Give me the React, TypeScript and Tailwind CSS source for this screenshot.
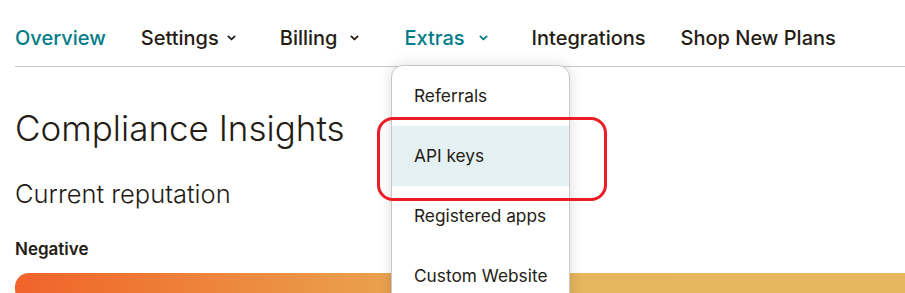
import React from 'react';

const Chevron: React.FC<{ className?: string }> = ({ className }) => (
  <svg viewBox="0 0 10 6" className={className} fill="none" stroke="currentColor" strokeWidth="2" strokeLinecap="round" strokeLinejoin="round">
    <path d="M1.5 1.2 5 4.6 8.5 1.2" />
  </svg>
);

const navItems = [
  { label: 'Overview', active: true, chevron: false, cls: '' },
  { label: 'Settings', chevron: true, gap: 'ml-[8px]', cls: 'mr-[9px]' },
  { label: 'Billing', chevron: true, gap: 'ml-[13px]', cls: 'mr-[10px]' },
  { label: 'Extras', active: true, chevron: true, gap: 'ml-[14px]', cls: 'mr-[9px]' },
  { label: 'Integrations', chevron: false, cls: '' },
  { label: 'Shop New Plans', chevron: false, cls: '' },
];

const menuItems = ['Referrals', 'API keys', 'Registered apps', 'Custom Website'];

const App: React.FC = () => {
  return (
    <div className="relative h-[293px] w-[905px] overflow-hidden bg-white text-[#241c15] font-['Inter','Noto_Sans',sans-serif]">
      {/* top nav */}
      <nav className="ml-[15px] flex h-[67px] items-center gap-[35px] border-b border-[#c8c8c8] pt-[10px] text-[20px] font-medium">
        {navItems.map(item => (
          <div
            key={item.label}
            className={`flex items-center ${item.active ? 'text-[#007c89]' : 'text-[#241c15]'} ${item.cls}`}
          >
            <span>{item.label}</span>
            {item.chevron && <Chevron className={`${item.gap} h-[6px] w-[9px]`} />}
          </div>
        ))}
      </nav>

      {/* page body */}
      <main className="pl-[15px]">
        <h1 className="mt-[37px] text-[35px] font-light leading-[48px]">Compliance Insights</h1>
        <h2 className="mt-[25px] text-[25.5px] font-light leading-[34px]">Current reputation</h2>
        <p className="mt-[27px] text-[17px] font-semibold leading-[22px]">Negative</p>
        <div className="mt-[13px] h-[30px] w-[920px] rounded-l-[14px] bg-[linear-gradient(to_right,#f1632a_0%,#ec8a40_25%,#e8a853_45%,#e6b65e_62%,#e6b75f_100%)]" />
      </main>

      {/* Extras dropdown */}
      <div className="absolute left-[391px] top-[65px] w-[179px] overflow-hidden rounded-t-[12px] border border-[#c8c8c8] bg-white shadow-[0_0_14px_rgba(0,0,0,0.14)]">
        {menuItems.map(label => (
          <div
            key={label}
            className={`flex h-[60px] items-center pl-[22px] text-[17.3px] text-[#241c15] ${label === 'API keys' ? 'bg-[#e5f0f2]' : ''}`}
          >
            {label}
          </div>
        ))}
      </div>

      {/* annotation outline */}
      <div className="absolute left-[377px] top-[117px] h-[84px] w-[230px] rounded-[16px] border-[3px] border-[#ec1c24]" />
    </div>
  );
};

export default App;
